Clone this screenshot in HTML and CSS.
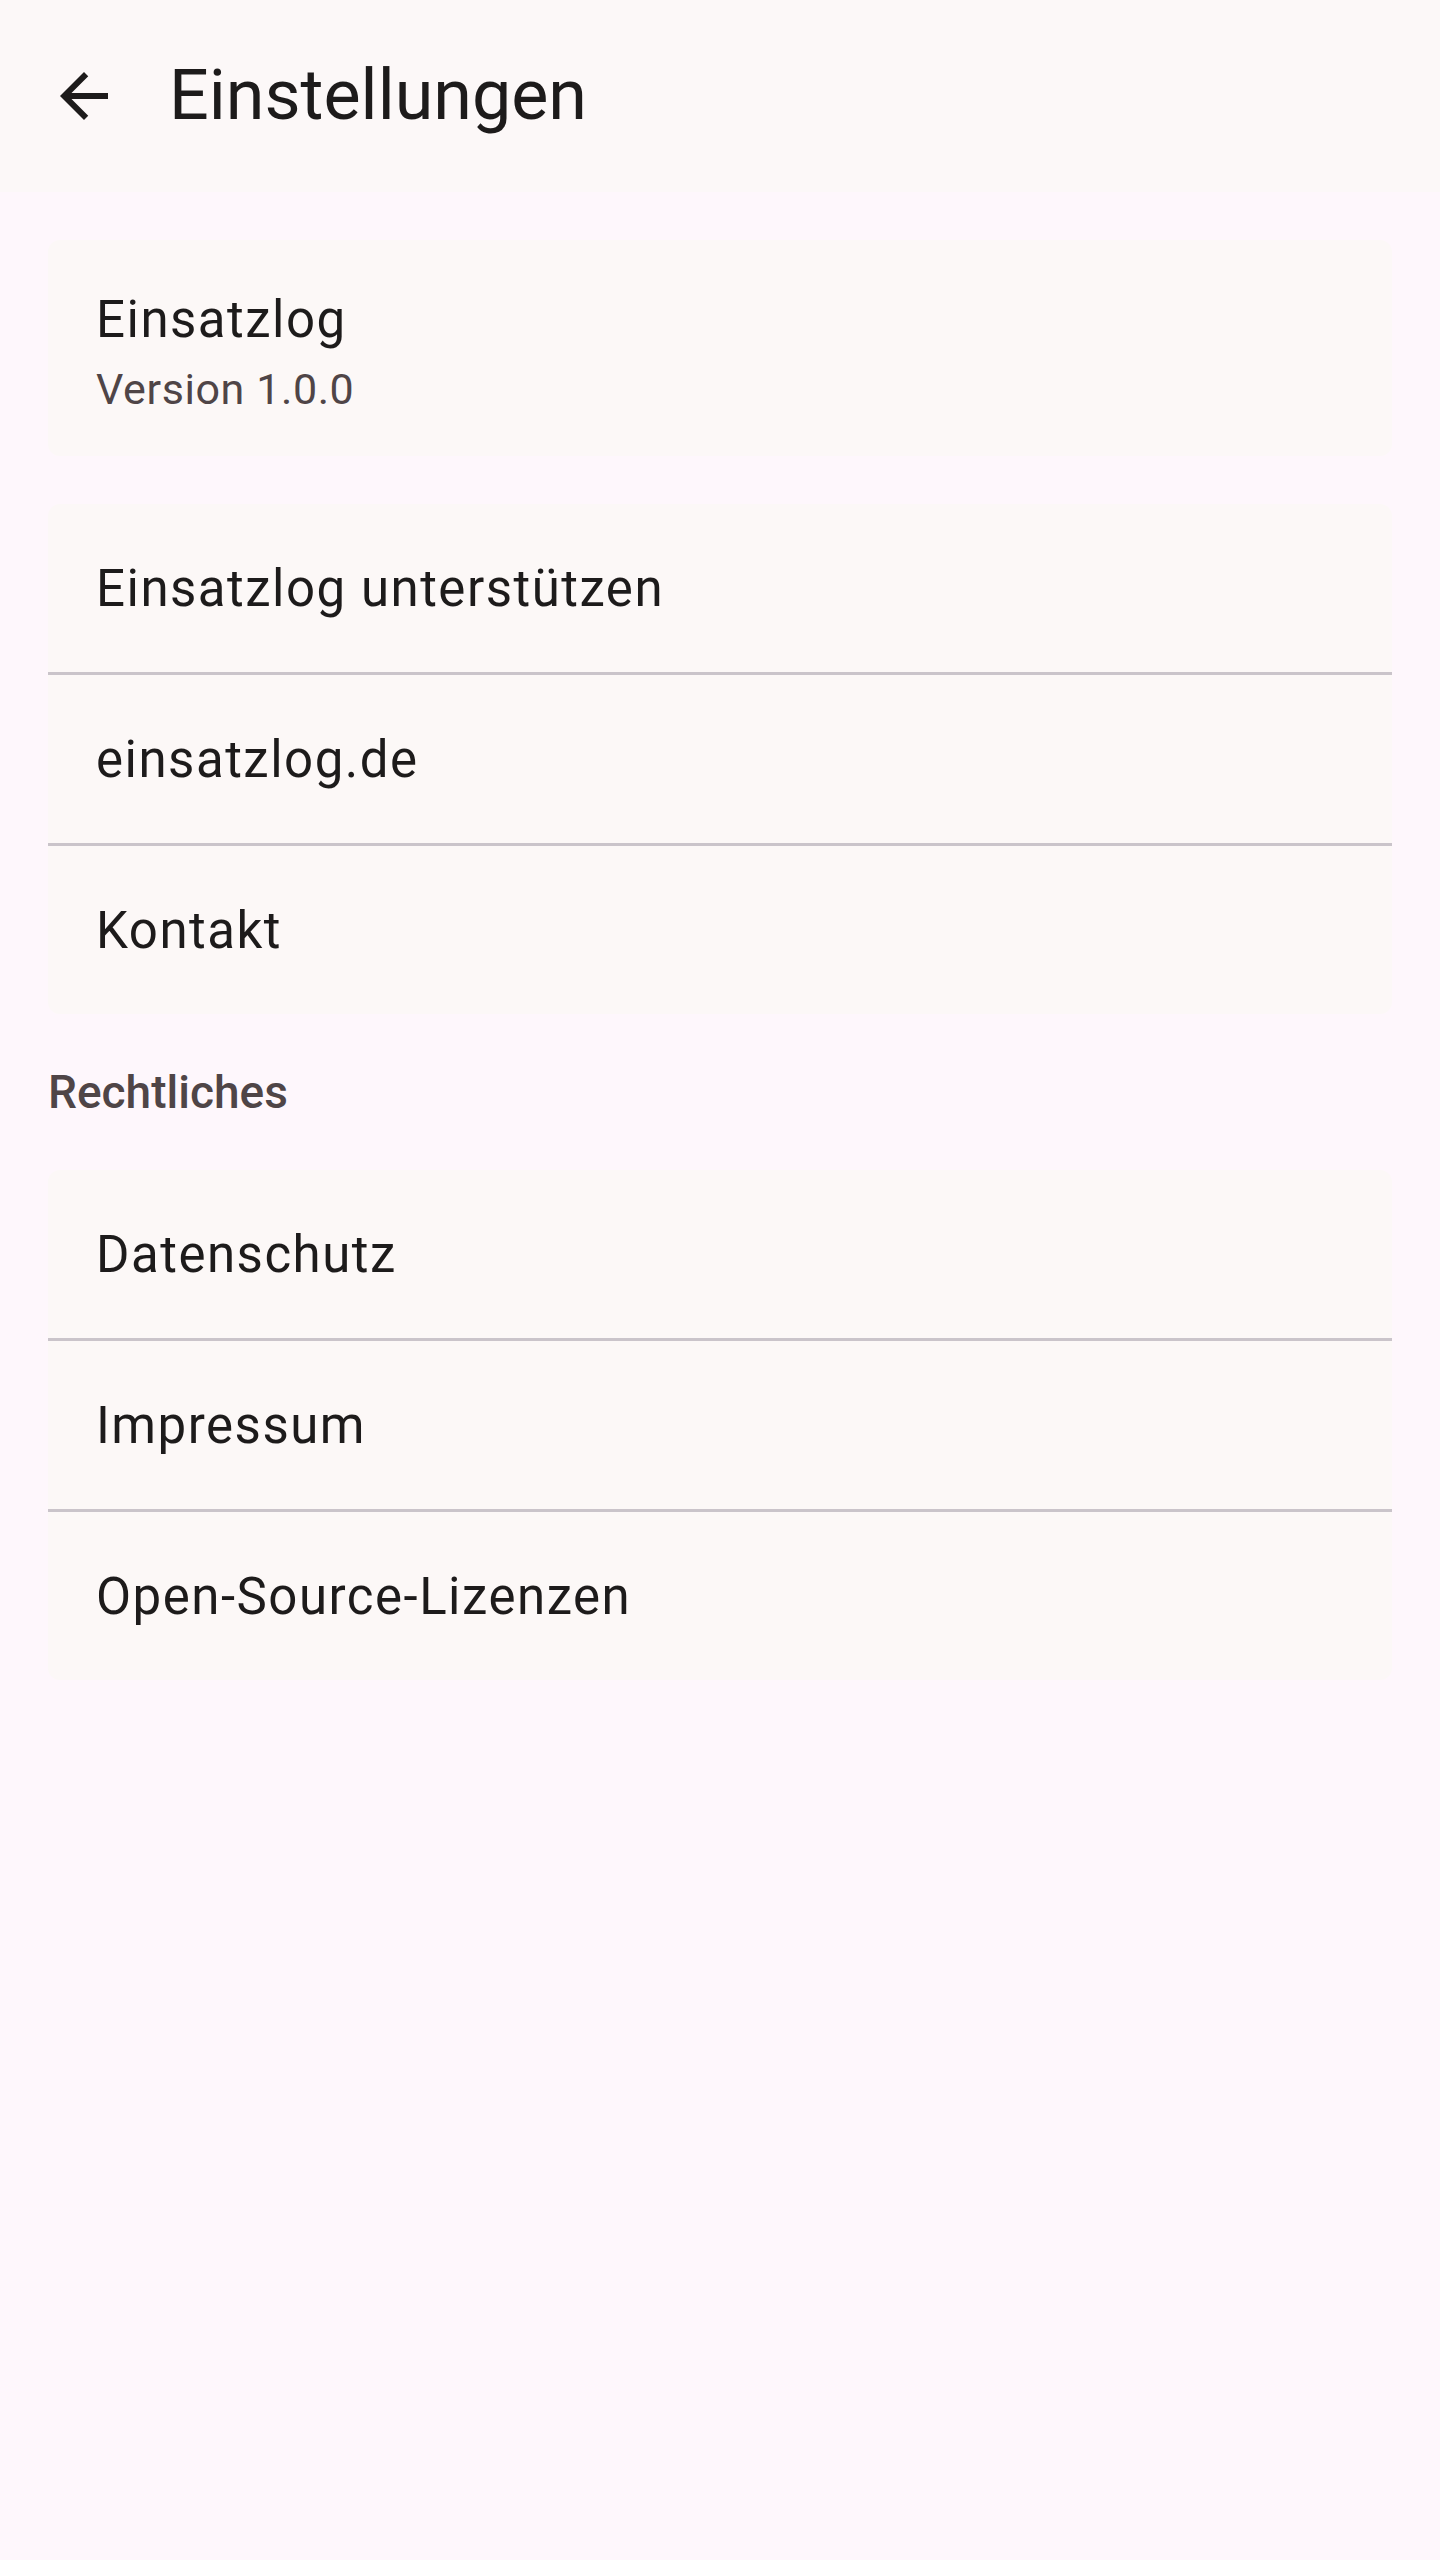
FILE: index.html
```html
<!doctype html>
<html lang="de">
    <head>
        <title>Einstellungen</title>
        <meta charset="utf-8">
        <meta name="viewport" content="width=device-width, initial-scale=1">
        <link rel="stylesheet" href="styles.css">
    </head>

    <body>
        <header class="app-bar">
            <button class="back" aria-label="Zurück">
                <svg viewBox="0 0 24 24" width="72" height="72">
                    <path d="M20 11H7.83l5.59-5.59L12 4l-8 8 8 8 1.41-1.41L7.83 13H20v-2z"/>
                </svg>
            </button>
            <h1>Einstellungen</h1>
        </header>

        <main class="content">
            <section class="card">
                <div class="item two-line">
                    <span class="headline">Einsatzlog</span>
                    <span class="supporting">Version 1.0.0</span>
                </div>
            </section>

            <section class="card">
                <a class="item" href="#">Einsatzlog unterstützen</a>
                <a class="item" href="#">einsatzlog.de</a>
                <a class="item" href="#">Kontakt</a>
            </section>

            <h2 class="group-label">Rechtliches</h2>

            <section class="card">
                <a class="item" href="#">Datenschutz</a>
                <a class="item" href="#">Impressum</a>
                <a class="item" href="#">Open-Source-Lizenzen</a>
            </section>
        </main>
    </body>
</html>
```

FILE: styles.css
```css
html {
    background: #fef7fc;
}

body {
    margin: 0;
    font-family: Roboto, "Liberation Sans", sans-serif;
    color: #1d1b1b;
}

.app-bar {
    display: flex;
    align-items: center;
    height: 192px;
    background: #fcf8f8;
}

.app-bar .back {
    display: flex;
    margin: 0 49px 0 48px;
    padding: 0;
    border: 0;
    background: none;
    fill: #1d1b1b;
}

.app-bar h1 {
    margin: 0 0 2px;
    font-size: 70px;
    font-weight: normal;
}

.content {
    display: flex;
    flex-direction: column;
    gap: 48px;
    padding: 48px;
}

.card {
    display: flex;
    flex-direction: column;
    background: #fcf8f7;
    border-radius: 12px;
    overflow: hidden;
}

.item {
    display: flex;
    align-items: center;
    height: 168px;
    padding: 0 48px;
    font-size: 51px;
    letter-spacing: 1.5px;
    color: #1d1b1b;
    text-decoration: none;
}

.item + .item {
    border-top: 3px solid #cac4ca;
}

.item.two-line {
    flex-direction: column;
    align-items: flex-start;
    justify-content: center;
    height: 216px;
    padding-top: 5px;
    box-sizing: border-box;
}

.two-line .headline {
    margin-top: 2px;
}

.two-line .supporting {
    margin-top: 15px;
    font-size: 43px;
    letter-spacing: 0.6px;
    color: #4f4547;
}

.group-label {
    margin: 0;
    height: 60px;
    line-height: 60px;
    font-size: 46px;
    font-weight: 500;
    color: #4f4547;
}
```
